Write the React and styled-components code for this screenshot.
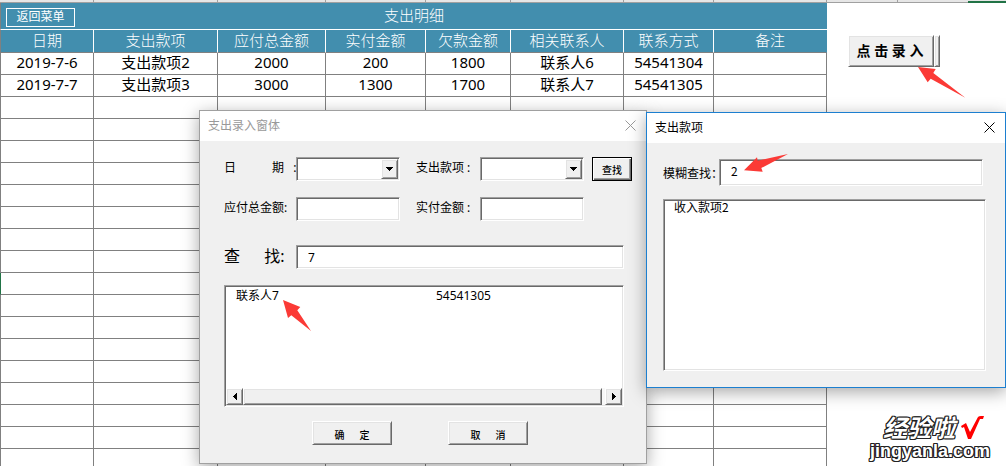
// libraries
import { useState } from 'react';
import styled, { createGlobalStyle, css } from 'styled-components';

const colors = {
  teal: '#428eae',
  line: '#808080',
  face: '#f0f0f0',
  green: '#217346',
  arrow: '#fb3a36',
};

const columns = [
  { title: '日期', width: 94 },
  { title: '支出款项', width: 124 },
  { title: '应付总金额', width: 108 },
  { title: '实付金额', width: 100 },
  { title: '欠款金额', width: 85 },
  { title: '相关联系人', width: 113 },
  { title: '联系方式', width: 90 },
  { title: '备注', width: 113 },
];

const records = [
  ['2019-7-6', '支出款项2', '2000', '200', '1800', '联系人6', '54541304', ''],
  ['2019-7-7', '支出款项3', '3000', '1300', '1700', '联系人7', '54541305', ''],
];

const ROW_COUNT = 19;
const ACTIVE_ROW = 10;

const GlobalStyle = createGlobalStyle`
  * {
    box-sizing: border-box;
  }

  body {
    background: #fff;
    color: #000;
    font-family: 'Noto Sans', 'Noto Sans CJK SC', sans-serif;
    font-size: 12px;
    margin: 0;
  }

  button,
  input,
  select {
    border-radius: 0;
    color: inherit;
    font-family: inherit;
    margin: 0;
    outline: none;
  }
`;

const sunken = css`
  background: #fff;
  border: 1px solid;
  border-color: #a0a0a0 #fff #fff #a0a0a0;
  box-shadow: inset 1px 1px #696969, inset -1px -1px #e3e3e3;
`;

const raised = css`
  background: ${colors.face};
  border: 1px solid;
  border-color: #fff #696969 #696969 #fff;
  box-shadow: inset 1px 1px #e3e3e3, inset -1px -1px #a0a0a0;
`;

const Page = styled.main`
  height: 100vh;
  overflow: hidden;
  position: relative;
`;

const ColumnStrip = styled.div`
  background: #e6e6e6;
  border-bottom: 1px solid #a0a0a0;
  display: flex;
  height: 3px;
`;

const StripCell = styled.div`
  border-right: 1px solid #a0a0a0;
  flex: none;
  width: ${({ $width }) => $width}px;
`;

const StripSelected = styled.div`
  border-bottom: 2px solid ${colors.green};
  flex: 1;
  height: 3px;
  margin-left: 70px;
`;

const Sheet = styled.div`
  display: flex;
`;

const Table = styled.table`
  border-collapse: separate;
  border-spacing: 0;
  flex: none;
  font-size: 15px;
  line-height: 19px;
  table-layout: fixed;
  width: 827px;

  th,
  td {
    padding: 0 0 2px;
    text-align: center;
    white-space: nowrap;
  }

  th {
    background: ${colors.teal};
    color: #fff;
    font-weight: 300;
  }

  th:first-child,
  td:first-child {
    border-left: 1px solid ${colors.line};
  }
`;

const TitleCell = styled.th`
  border-bottom: 1px solid #fff;
  height: 27px;
`;

const TitleBar = styled.div`
  align-items: start;
  display: grid;
  grid-template-columns: 1fr auto 1fr;
  padding: 2px 5px 0;
`;

const MenuButton = styled.button`
  background: transparent;
  border: 1px solid #fff;
  font-size: 12px;
  height: 19px;
  justify-self: start;
  line-height: 16px;
  margin-top: 2px;
  padding: 0;
  width: 69px;
`;

const HeadCell = styled.th`
  border-bottom: 1px solid ${colors.line};
  border-right: 1px solid #fff;
  height: 23px;

  &:last-child {
    border-right-color: ${colors.teal};
  }
`;

const Row = styled.tr`
  td {
    border-bottom: 1px solid ${colors.line};
    border-right: 1px solid ${colors.line};
    height: 22px;
  }

  td:first-child {
    border-left-color: ${({ $active }) => ($active ? colors.green : colors.line)};
  }
`;

const Side = styled.aside`
  flex: 1;
  padding: 32px 0 0 21px;
`;

const EntryGroup = styled.div`
  display: flex;
  position: relative;
`;

const EntryButton = styled.button`
  ${raised}
  font-size: 14px;
  font-weight: 700;
  height: 32px;
  padding: 0 2px 2px 0;
  width: 86px;
`;

const EntryEdge = styled.span`
  ${raised}
  width: 6px;
`;

const Window = styled.section`
  background: ${colors.face};
  border: 1px solid ${({ $active }) => ($active ? '#1c7fd0' : '#a0a0a0')};
  box-shadow: 0 4px 16px rgba(0, 0, 0, 0.35);
  left: ${({ $x }) => $x}px;
  position: absolute;
  top: ${({ $y }) => $y}px;
  width: ${({ $width }) => $width}px;
`;

const WindowBar = styled.header`
  align-items: center;
  background: #fff;
  color: ${({ $muted }) => ($muted ? '#999' : '#000')};
  display: flex;
  height: 30px;
  justify-content: space-between;
  padding: 0 10px 2px 8px;
`;

const WindowTitle = styled.h2`
  font-size: 12px;
  font-weight: 400;
  margin: 0;
`;

const CloseButton = styled.button`
  background: none;
  border: 0;
  display: flex;
  padding: 0;
`;

const EntryForm = styled.form`
  padding: 16px 14px 18px 24px;
`;

const Fields = styled.div`
  align-items: center;
  display: grid;
  grid-template-columns: 72px 104px 16px 64px 104px 8px 40px;
  grid-template-rows: 24px 24px;
  row-gap: 16px;
`;

const Label = styled.label`
  font-size: ${({ $large }) => ($large ? 16 : 12)}px;
  grid-column: ${({ $column }) => $column || 'auto'};
  line-height: 20px;
  padding-bottom: 2px;
  white-space: pre;
`;

const SearchRow = styled.div`
  align-items: center;
  display: grid;
  grid-template-columns: 72px 1fr;
  grid-template-rows: 24px;
  margin: 24px 8px 16px 0;
`;

const TextInput = styled.input`
  ${sunken}
  font-size: 12px;
  height: 24px;
  padding: 0 11px;
  width: 100%;
`;

const ComboBox = styled.div`
  ${sunken}
  height: 24px;
  position: relative;

  select {
    appearance: none;
    background: transparent;
    border: 0;
    height: 100%;
    padding: 0 20px 0 8px;
    width: 100%;
  }
`;

const ComboArrow = styled.span`
  ${raised}
  align-items: center;
  bottom: 1px;
  display: flex;
  justify-content: center;
  pointer-events: none;
  position: absolute;
  right: 1px;
  top: 1px;
  width: 17px;
`;

const FindButton = styled.button`
  ${raised}
  border-color: #000;
  font-size: 10px;
  font-weight: 500;
  grid-column: 7;
  height: 24px;
  box-shadow: inset 1px 1px #fff, inset -1px -1px #696969, inset -2px -2px #a0a0a0;
  padding: 0;
`;

const ListBox = styled.div`
  ${sunken}
  display: flex;
  flex-direction: column;
  height: 122px;
  justify-content: space-between;
  margin-right: 8px;
  padding: 1px;
`;

const ListItem = styled.div`
  display: grid;
  grid-template-columns: 200px 1fr;
  line-height: 18px;
  padding: 0 0 0 10px;
`;

const ScrollBar = styled.div`
  background: #f8f8f8;
  display: flex;
  height: 17px;
  justify-content: space-between;
`;

const ScrollButton = styled.button`
  ${raised}
  align-items: center;
  display: flex;
  justify-content: center;
  padding: 0;
  width: 17px;
`;

const ScrollThumb = styled.div`
  ${raised}
  flex: 1;
  margin-right: 3px;
`;

const Actions = styled.div`
  display: flex;
  gap: 56px;
  margin-top: 14px;
  padding-left: 88px;
`;

const ActionButton = styled.button`
  ${raised}
  font-size: 10px;
  font-weight: 500;
  height: 24px;
  padding: 3px 0 0;
  white-space: pre;
  width: 80px;
`;

const FilterForm = styled.form`
  font-family: 'Noto Sans CJK SC', sans-serif;
  padding: 16px;
`;

const FilterRow = styled.div`
  display: grid;
  grid-template-columns: 56px 1fr;
  margin: 0 6px 13px 0;
  align-items: center;
  white-space: nowrap;

  input {
    font-size: 12px;
    height: 27px;
    padding-bottom: 4px;
  }
`;

const FilterList = styled.div`
  ${sunken}
  height: 172px;
  line-height: 12px;
  margin-right: 3px;
  padding: 1px 10px;
`;

const ArrowSvg = styled.svg`
  fill: ${colors.arrow};
  left: ${({ $x }) => $x}px;
  pointer-events: none;
  position: absolute;
  top: ${({ $y }) => $y}px;
`;

const Watermark = styled.div`
  bottom: 6px;
  color: #fff;
  font-family: 'Liberation Sans', 'Noto Sans CJK SC', sans-serif;
  font-weight: 700;
  position: absolute;
  right: 16px;
  text-shadow: 1px 0 #222, -1px 0 #222, 0 1px #222, 0 -1px #222, 1px 1px #222, -1px -1px #222, 1px -1px #222,
    -1px 1px #222;
`;

const WatermarkName = styled.div`
  align-items: start;
  display: flex;
  font-size: 24px;
  font-style: italic;
  gap: 6px;
  line-height: 26px;
  padding-left: 13px;
`;

const WatermarkSite = styled.div`
  font-size: 18px;
  line-height: 18px;
`;

const CloseIcon = () => (
  <svg width="11" height="11" viewBox="0 0 11 11" fill="none" stroke="currentColor">
    <path d="M0.5 0.5 L10.5 10.5 M10.5 0.5 L0.5 10.5" />
  </svg>
);

const Triangle = ({ points, width, height }) => (
  <svg width={width} height={height} viewBox={`0 0 ${width} ${height}`} shapeRendering="crispEdges">
    <polygon points={points} />
  </svg>
);

const Arrow = ({ points, width, height, x, y }) => (
  <ArrowSvg $x={x} $y={y} width={width} height={height} viewBox={`0 0 ${width} ${height}`} aria-hidden="true">
    <polygon points={points} />
  </ArrowSvg>
);

const Combo = ({ id }) => (
  <ComboBox>
    <select id={id} defaultValue="">
      <option value="" />
    </select>
    <ComboArrow>
      <Triangle width={7} height={4} points="0,0 7,0 3.5,4" />
    </ComboArrow>
  </ComboBox>
);

const ExpenseTable = () => {
  const rows = Array.from({ length: ROW_COUNT }, (_, index) => records[index] || columns.map(() => ''));

  return (
    <Table>
      <colgroup>
        {columns.map(({ title, width }) => (
          <col key={title} width={width} />
        ))}
      </colgroup>
      <thead>
        <tr>
          <TitleCell colSpan={columns.length}>
            <TitleBar>
              <MenuButton type="button">返回菜单</MenuButton>
              <span>支出明细</span>
            </TitleBar>
          </TitleCell>
        </tr>
        <tr>
          {columns.map(({ title }) => (
            <HeadCell key={title}>{title}</HeadCell>
          ))}
        </tr>
      </thead>
      <tbody>
        {rows.map((cells, rowIndex) => (
          <Row key={rowIndex} $active={rowIndex === ACTIVE_ROW}>
            {cells.map((cell, index) => (
              <td key={columns[index].title}>{cell}</td>
            ))}
          </Row>
        ))}
      </tbody>
    </Table>
  );
};

const EntryWindow = () => {
  const [search, setSearch] = useState('7');

  return (
    <Window $x={199} $y={110} $width={448}>
      <WindowBar $muted>
        <WindowTitle>支出录入窗体</WindowTitle>
        <CloseButton type="button" aria-label="关闭">
          <CloseIcon />
        </CloseButton>
      </WindowBar>
      <EntryForm onSubmit={(event) => event.preventDefault()}>
        <Fields>
          <Label htmlFor="date">日　　　期 &nbsp; :</Label>
          <Combo id="date" />
          <Label htmlFor="item" $column={4}>
            支出款项 :
          </Label>
          <Combo id="item" />
          <FindButton type="submit">查找</FindButton>
          <Label htmlFor="due" $column={1}>
            应付总金额:
          </Label>
          <TextInput id="due" />
          <Label htmlFor="paid" $column={4}>
            实付金额 :
          </Label>
          <TextInput id="paid" />
        </Fields>
        <SearchRow>
          <Label htmlFor="search" $large>
            查　&nbsp; 找:
          </Label>
          <TextInput id="search" value={search} onChange={(event) => setSearch(event.target.value)} />
        </SearchRow>
        <ListBox>
          <ListItem>
            <span>联系人7</span>
            <span>54541305</span>
          </ListItem>
          <ScrollBar>
            <ScrollButton type="button" aria-label="向左">
              <Triangle width={4} height={7} points="4,0 4,7 0,3.5" />
            </ScrollButton>
            <ScrollThumb />
            <ScrollButton type="button" aria-label="向右">
              <Triangle width={4} height={7} points="0,0 4,3.5 0,7" />
            </ScrollButton>
          </ScrollBar>
        </ListBox>
        <Actions>
          <ActionButton type="submit">确　&nbsp; 定</ActionButton>
          <ActionButton type="button">取　&nbsp; 消</ActionButton>
        </Actions>
      </EntryForm>
      <Arrow x={83} y={189} width={28} height={31} points="0,0 17.3,7 14.3,10.3 28,31 8.3,15.3 5,18" />
    </Window>
  );
};

const FilterWindow = () => {
  const [filter, setFilter] = useState('2');

  return (
    <Window $x={646} $y={112} $width={360} $active>
      <WindowBar>
        <WindowTitle>支出款项</WindowTitle>
        <CloseButton type="button" aria-label="关闭">
          <CloseIcon />
        </CloseButton>
      </WindowBar>
      <FilterForm onSubmit={(event) => event.preventDefault()}>
        <FilterRow>
          <label htmlFor="filter">模糊查找：</label>
          <TextInput id="filter" value={filter} onChange={(event) => setFilter(event.target.value)} />
        </FilterRow>
        <FilterList>收入款项2</FilterList>
      </FilterForm>
      <Arrow x={97} y={41} width={45} height={18} points="0,16.3 13,3.3 13.7,6.7 44,0 17.3,14 18.7,17.7" />
    </Window>
  );
};

const App = () => (
  <>
    <GlobalStyle />
    <Page>
      <ColumnStrip>
        {columns.map(({ title, width }) => (
          <StripCell key={title} $width={width} />
        ))}
        <StripCell $width={71} />
        <StripSelected />
      </ColumnStrip>
      <Sheet>
        <ExpenseTable />
        <Side>
          <EntryGroup>
            <EntryButton type="button">点 击 录 入</EntryButton>
            <EntryEdge />
            <Arrow x={70} y={32} width={48} height={31} points="0,0 17.7,2 15.3,6 47.3,30.7 12.7,11.7 9.7,15.3" />
          </EntryGroup>
        </Side>
      </Sheet>
      <EntryWindow />
      <FilterWindow />
      <Watermark>
        <WatermarkName>
          <span>经验啦</span>
          <svg width="23" height="24" viewBox="0 0 23 24" fill="#f00" aria-hidden="true">
            <path d="M0 10 L5 7 L9 16 L17 1 Q18 0 20 0 H23 L22 3 H19 L10 23 H7 L3 11 L1 12 Z" />
          </svg>
        </WatermarkName>
        <WatermarkSite>jingyanla.com</WatermarkSite>
      </Watermark>
    </Page>
  </>
);

export default App;
